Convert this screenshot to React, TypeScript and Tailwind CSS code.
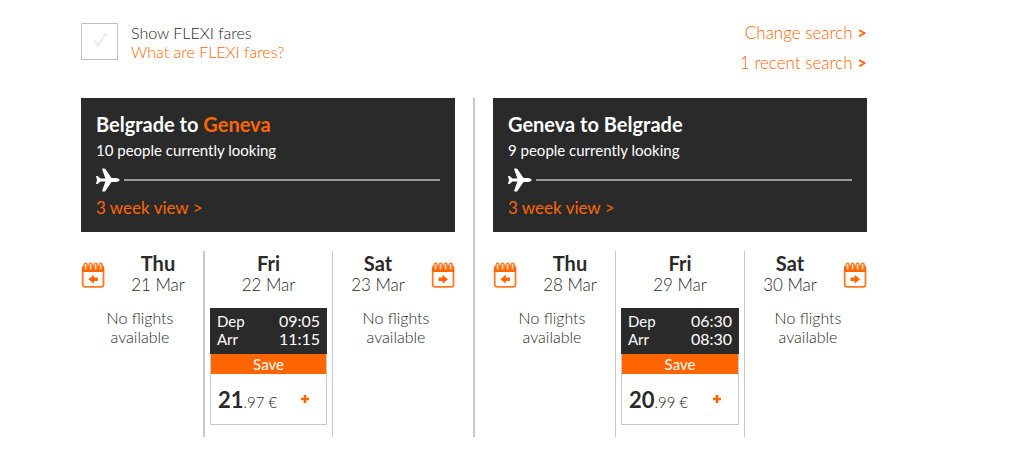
import clsx from "clsx";

type Fare = { dep: string; arr: string; whole: string; cents: string };
type Day = { name: string; date: string; fare?: Fare };
type Route = { from: string; to: string; highlight: boolean; looking: number; days: Day[] };

const routes: Route[] = [
  {
    from: "Belgrade",
    to: "Geneva",
    highlight: true,
    looking: 10,
    days: [
      { name: "Thu", date: "21 Mar" },
      { name: "Fri", date: "22 Mar", fare: { dep: "09:05", arr: "11:15", whole: "21", cents: "97" } },
      { name: "Sat", date: "23 Mar" },
    ],
  },
  {
    from: "Geneva",
    to: "Belgrade",
    highlight: false,
    looking: 9,
    days: [
      { name: "Thu", date: "28 Mar" },
      { name: "Fri", date: "29 Mar", fare: { dep: "06:30", arr: "08:30", whole: "20", cents: "99" } },
      { name: "Sat", date: "30 Mar" },
    ],
  },
];

function PlaneIcon() {
  return (
    <svg className="w-6 h-6 shrink-0" viewBox="0 0 24 24" fill="#fff" aria-hidden="true">
      <path d="M0 8h1.6l2.9 2.6h4.9L6.2 1.6Q6 .6 6.8.5h1.5q.7 0 1.1.6l6.1 8.9h4.3q3.7.6 3.8 2-.1 1.4-3.8 2h-4.3l-6.1 8.9q-.4.6-1.1.6H6.8q-.8-.1-.6-1.1l3.2-9H4.5L1.6 16H0l1-4z" />
    </svg>
  );
}

function CalendarIcon({ next }: { next: boolean }) {
  return (
    <svg className="w-6 h-[26px]" viewBox="0 0 24 26" fill="none" aria-hidden="true">
      <rect x="1.7" y="4.2" width="20.8" height="20.6" rx="2" stroke="#ff7a22" strokeWidth="1.8" />
      <path d="M1 10V6q0-2 2-2h18q2 0 2 2v4z" fill="#ff6600" />
      {[4.6, 9.6, 14.6, 19.6].map((x) => (
        <g key={x}>
          <rect x={x - 2} y="0.6" width="4.2" height="7.4" rx="2" fill="#ff7a22" />
          <rect x={x - 0.8} y="1.8" width="1.5" height="5.6" rx="0.7" fill="#ffd9c0" />
        </g>
      ))}
      {next ? (
        <path d="M7.5 15.6h4.1v-2.8l5.4 4.5-5.4 4.5V19H7.5z" fill="#ff6600" />
      ) : (
        <path d="M16.9 15.6h-4.1v-2.8l-5.4 4.5 5.4 4.5V19h4.1z" fill="#ff6600" />
      )}
    </svg>
  );
}

function FareCard({ fare }: { fare: Fare }) {
  return (
    <button type="button" className="block w-full text-left cursor-pointer">
      <span className="block bg-[#2a2a2a] text-white text-[15px] leading-[18px] px-[7px] pt-1 pb-[6px]">
        <span className="flex justify-between">
          <span>Dep</span>
          <span className="text-base leading-[18px]">{fare.dep}</span>
        </span>
        <span className="flex justify-between">
          <span>Arr</span>
          <span className="text-base leading-[18px]">{fare.arr}</span>
        </span>
      </span>
      <span className="block border border-t-0 border-[#c8c8c8]">
        <span className="block bg-[#ff6600] text-white text-center text-[15px] leading-5">Save</span>
        <span className="flex items-center justify-between h-[50px] pl-[7px] pr-[17px]">
          <span className="pt-1 leading-7 text-[15px] font-light">
            <b className="text-[22px] font-bold">{fare.whole}</b>.{fare.cents} €
          </span>
          <svg className="w-2 h-2" viewBox="0 0 8 8" fill="#ff6600" aria-hidden="true">
            <path d="M2.7 0h2.6v2.7H8v2.6H5.3V8H2.7V5.3H0V2.7h2.7z" />
          </svg>
        </span>
      </span>
    </button>
  );
}

function DayHeading({ day }: { day: Day }) {
  return (
    <div className="flex-1 text-center leading-[22px]">
      <h3 className="text-xl leading-[22px] font-bold">{day.name}</h3>
      <p className="text-[17px] leading-[22px] font-light">{day.date}</p>
    </div>
  );
}

function SideDay({ day, next }: { day: Day; next: boolean }) {
  return (
    <div className="pt-px">
      <div className={clsx("flex items-center gap-2", next && "flex-row-reverse")}>
        <button type="button" aria-label={next ? "Later days" : "Earlier days"} className="cursor-pointer pt-[2px]">
          <CalendarIcon next={next} />
        </button>
        <DayHeading day={day} />
      </div>
      <p className={clsx("mt-3 text-center text-base leading-[19px] font-light", next ? "pl-1" : "pr-1")}>
        No flights
        <br />
        available
      </p>
    </div>
  );
}

function RoutePanel({ route }: { route: Route }) {
  const [before, current, after] = route.days;
  return (
    <section>
      <div className="bg-[#2a2a2a] text-white px-[15px] pt-[14px] pb-3">
        <h2 className="text-xl leading-[25px] font-bold">
          {route.from} to <span className={clsx(route.highlight && "text-[#ff6600]")}>{route.to}</span>
        </h2>
        <p className="text-[15px] leading-[26px]">{route.looking} people currently looking</p>
        <div className="flex items-center gap-1 mt-[5px] mb-[3px]">
          <PlaneIcon />
          <div className="flex-1 h-0.5 bg-[#999]" />
        </div>
        <a href="#" className="block text-[17px] leading-[25px] text-[#ff6600]">
          3 week view &gt;
        </a>
      </div>
      <div className="grid grid-cols-[1fr_130px_1fr] mt-[19px]">
        <SideDay day={before} next={false} />
        <div
          className={clsx(
            "border-r border-[#c8c8c8] pt-px pb-3 px-[5px]",
            route.highlight ? "border-l-2" : "border-l",
          )}
        >
          <DayHeading day={current} />
          <div className="mt-3">{current.fare && <FareCard fare={current.fare} />}</div>
        </div>
        <SideDay day={after} next />
      </div>
    </section>
  );
}

function SearchLink({ children }: { children: string }) {
  return (
    <a href="#" className="text-[#ff6600]">
      {children} <b className="font-bold">&gt;</b>
    </a>
  );
}

export default function App() {
  return (
    <main className="bg-white text-[#2a2a2a] font-['Lato',sans-serif] pl-[81px] pr-36 pt-[18px]">
      <header className="flex justify-between items-start h-20">
        <div className="flex gap-[13px] pt-[5px]">
          <div className="relative w-[37px] h-[37px]">
            <input
              id="flexi"
              type="checkbox"
              className="peer block appearance-none w-full h-full border border-[#c0c0c0] bg-white cursor-pointer"
            />
            <svg
              className="absolute left-3 top-[9px] w-[15px] h-4 pointer-events-none text-[#ededed] peer-checked:text-[#ff6600]"
              viewBox="0 0 15 16"
              fill="currentColor"
              aria-hidden="true"
            >
              <path d="M.5 9.2 3 8l2.3 3.2L11.8.8h2.6L6 15H4.4z" />
            </svg>
          </div>
          <div className="text-base leading-[19px] font-light">
            <label htmlFor="flexi" className="block">
              Show FLEXI fares
            </label>
            <a href="#" className="block text-[#ff6600]">
              What are FLEXI fares?
            </a>
          </div>
        </div>
        <nav className="flex flex-col items-end text-[17px] leading-[30px] font-light">
          <SearchLink>Change search</SearchLink>
          <SearchLink>1 recent search</SearchLink>
        </nav>
      </header>
      <div className="grid grid-cols-[1fr_2px_1fr] gap-x-[18px]">
        <RoutePanel route={routes[0]} />
        <div className="bg-[#c8c8c8]" />
        <RoutePanel route={routes[1]} />
      </div>
    </main>
  );
}
